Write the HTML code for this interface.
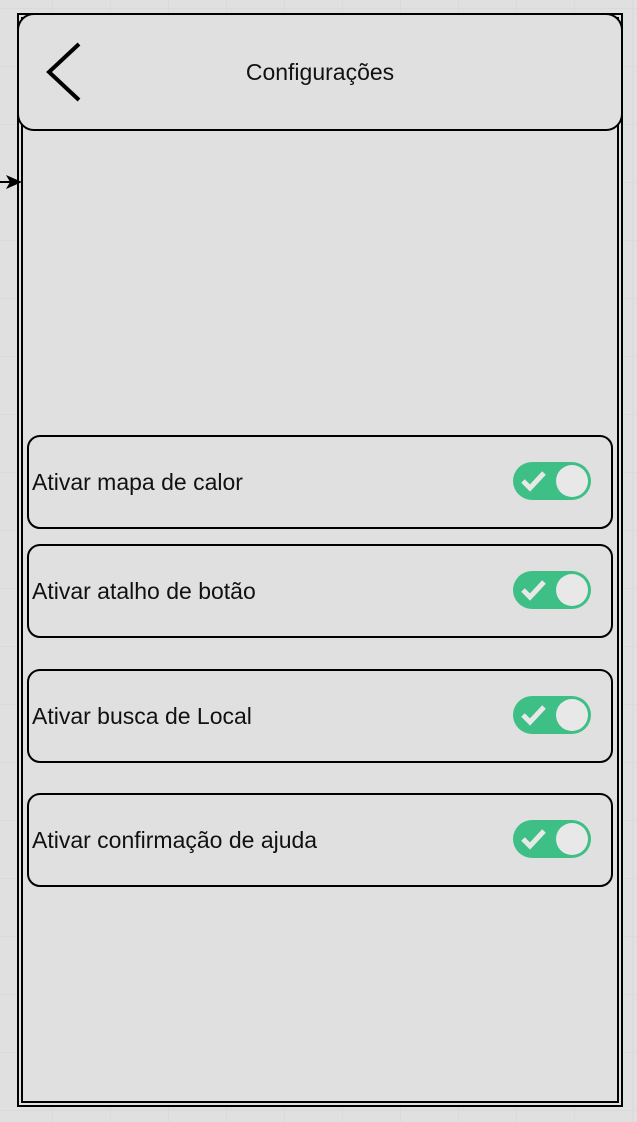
<!DOCTYPE html><html><head><style>
body{margin:0;width:637px;height:1122px;background:#e0e0e0;position:relative;overflow:hidden;font-family:"Liberation Sans",Arial,sans-serif;
background-image:linear-gradient(#dadada 1px,transparent 1px),linear-gradient(90deg,#dadada 1px,transparent 1px);background-size:58px 58px;background-position:-6px 8px}
.a{position:absolute;box-sizing:border-box}
.card{position:absolute;left:27px;width:586px;height:94px;border:2px solid #000;border-radius:13px;background:#e0e0e0;box-sizing:border-box}
.card span{position:absolute;left:3px;top:32px;font-size:23px;color:#111}
.tg{position:absolute;left:484px;top:25px;width:78px;height:38px;border-radius:19px;background:#3dbf85}
.tg i{position:absolute;right:3px;top:3px;width:32px;height:32px;border-radius:50%;background:#e8e8e8}
</style></head><body>
<div class="a" style="left:17px;top:13px;width:606px;height:1094px;border:2px solid #000;background:#e0e0e0"></div>
<div class="a" style="left:21px;top:17px;width:598px;height:1086px;border:2px solid #000"></div>
<div class="a" style="left:17px;top:13px;width:606px;height:118px;border:2px solid #000;border-radius:17px;background:#e0e0e0"></div>
<svg class="a" style="left:40px;top:40px" width="50" height="65"><path d="M39 4 L9 32 L39 60" stroke="#000" stroke-width="4" fill="none"/></svg>
<div class="a" style="left:0;width:640px;top:59px;text-align:center;font-size:23px;color:#111">Configurações</div>
<svg class="a" style="left:0;top:172px" width="24" height="20"><path d="M0 10H14" stroke="#000" stroke-width="2"/><path d="M6 3L22 10L6 17L10 10Z" fill="#000"/></svg>
<div class="card" style="top:435px"><span>Ativar mapa de calor</span><div class="tg"><svg width="40" height="38" style="position:absolute;left:6px"><path d="M4 19l7 7l14-15" stroke="#e8e8e8" stroke-width="5" fill="none"/></svg><i></i></div></div>
<div class="card" style="top:544px"><span>Ativar atalho de botão</span><div class="tg"><svg width="40" height="38" style="position:absolute;left:6px"><path d="M4 19l7 7l14-15" stroke="#e8e8e8" stroke-width="5" fill="none"/></svg><i></i></div></div>
<div class="card" style="top:669px"><span>Ativar busca de Local</span><div class="tg"><svg width="40" height="38" style="position:absolute;left:6px"><path d="M4 19l7 7l14-15" stroke="#e8e8e8" stroke-width="5" fill="none"/></svg><i></i></div></div>
<div class="card" style="top:793px"><span>Ativar confirmação de ajuda</span><div class="tg"><svg width="40" height="38" style="position:absolute;left:6px"><path d="M4 19l7 7l14-15" stroke="#e8e8e8" stroke-width="5" fill="none"/></svg><i></i></div></div>
</body></html>
